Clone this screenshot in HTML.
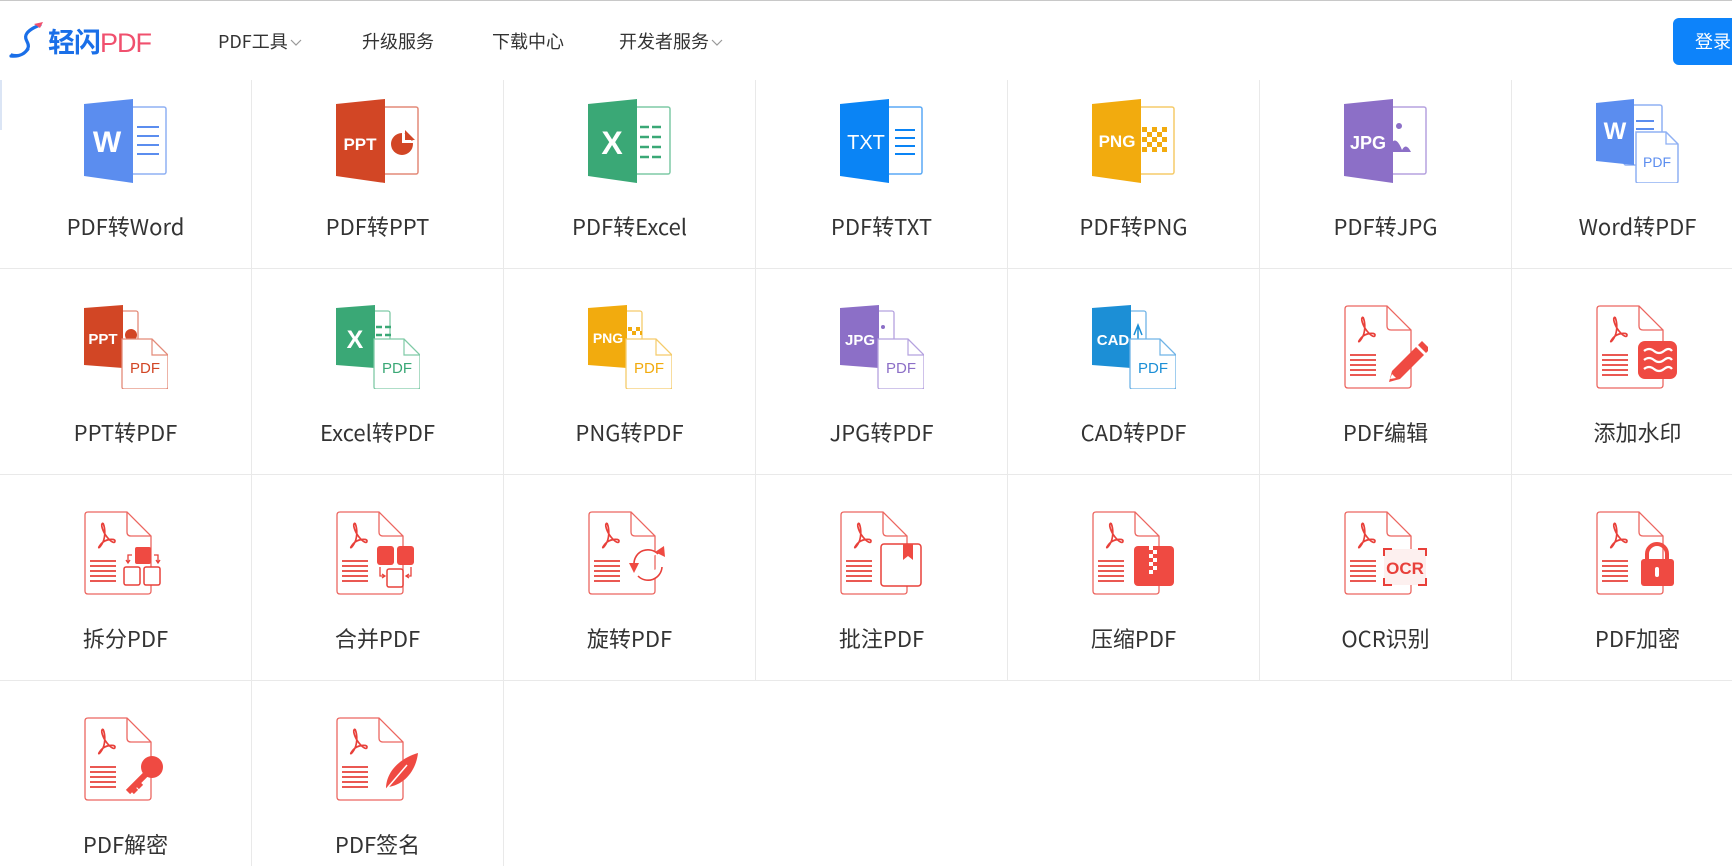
<!DOCTYPE html>
<html><head><meta charset="utf-8"><style>
*{margin:0;padding:0;box-sizing:border-box}
html,body{width:1732px;height:866px;overflow:hidden;background:#fff;font-family:"Noto Sans CJK SC","Liberation Sans",sans-serif;color:#333}
.hdr{position:absolute;left:0;top:0;width:1732px;height:80px;background:#fff;border-top:1px solid #c8c8c8;z-index:2}
.nav{position:absolute;top:27px;font-size:18px;color:#333;white-space:nowrap;line-height:26px}
.nav svg{vertical-align:middle;margin-left:2px}
.login{position:absolute;left:1673px;top:17px;width:59px;height:47px;border-radius:6px 0 0 6px;background:#0d83fa;color:#fff;font-size:18px;line-height:47px;padding-left:22px;white-space:nowrap;overflow:hidden}
.grid{position:absolute;left:0;top:63px;width:1732px;height:803px;overflow:hidden}
.cell{position:absolute;width:252px;height:206px;border-right:1px solid #e9e9e9;border-bottom:1px solid #e9e9e9}
.cell svg{position:absolute;left:84px;top:36px}
.cell .t{position:absolute;left:0;right:0;top:147px;text-align:center;font-size:22px;line-height:32px;color:#333}
</style></head><body>
<div class="hdr">
<svg style="position:absolute;left:8px;top:20px" width="40" height="38" viewBox="0 0 40 38"><path d="M32 4c-5 2-12 5-14 10s4 8 2 13-8 9-17 8" fill="none" stroke="#1a6fe8" stroke-width="3.2" stroke-linecap="round"/><path d="M26 3l9-2-3 6z" fill="#f0506e"/><path d="M3 33c7 2 15 0 18-5" fill="none" stroke="#1a6fe8" stroke-width="1.6"/></svg>
<div style="position:absolute;left:48px;top:22px;font-size:27px;line-height:36px;font-weight:bold;color:#1a6fe8;letter-spacing:-1px">轻闪<span style="color:#f0506e;font-weight:normal;font-family:'Liberation Sans',sans-serif">PDF</span></div>
<div class="nav" style="left:218px">PDF工具<svg width="12" height="8" viewBox="0 0 12 8"><path d="M1 1l5 5 5-5" fill="none" stroke="#999" stroke-width="1.2"/></svg></div>
<div class="nav" style="left:362px">升级服务</div>
<div class="nav" style="left:492px">下载中心</div>
<div class="nav" style="left:619px">开发者服务<svg width="12" height="8" viewBox="0 0 12 8"><path d="M1 1l5 5 5-5" fill="none" stroke="#999" stroke-width="1.2"/></svg></div>
<div class="login">登录</div>
</div>
<div style="position:absolute;left:0;top:80px;width:2px;height:50px;background:#dbe5f5;z-index:3"></div>
<div class="grid">
<div class="cell" style="left:0;top:0"><svg width="84" height="84" viewBox="0 0 84 84"><rect x="30" y="8" width="52" height="67" rx="2" fill="#fff" stroke="#8fb0f3" stroke-width="1.5"/><path d="M53 28h22M53 37h22M53 46h22M53 55h22" stroke="#5b8def" stroke-width="2"/><polygon points="0,5 49,0 49,84 0,77" fill="#5b8def"/><text x="23" y="53" font-size="30" font-weight="bold" fill="#fff" text-anchor="middle" font-family="Liberation Sans">W</text></svg><div class="t">PDF转Word</div></div>
<div class="cell" style="left:252px;top:0"><svg width="84" height="84" viewBox="0 0 84 84"><rect x="30" y="8" width="52" height="67" rx="2" fill="#fff" stroke="#e38a78" stroke-width="1.5"/><circle cx="66" cy="45" r="11" fill="#d24625"/><path d="M67 33v10h10" fill="#fff" stroke="#fff" stroke-width="2"/><path d="M69 31l10 10h-10z" fill="#d24625"/><polygon points="0,5 49,0 49,84 0,77" fill="#d24625"/><text x="24" y="51" font-size="17" font-weight="bold" fill="#fff" text-anchor="middle" font-family="Liberation Sans">PPT</text></svg><div class="t">PDF转PPT</div></div>
<div class="cell" style="left:504px;top:0"><svg width="84" height="84" viewBox="0 0 84 84"><rect x="30" y="8" width="52" height="67" rx="2" fill="#fff" stroke="#7fcaa6" stroke-width="1.5"/><path d="M52 28h9M64 28h9M52 38h9M64 38h9M52 48h9M64 48h9M52 58h9M64 58h9" stroke="#3aa876" stroke-width="2.5"/><polygon points="0,5 49,0 49,84 0,77" fill="#3aa876"/><text x="24" y="55" font-size="32" font-weight="bold" fill="#fff" text-anchor="middle" font-family="Liberation Sans">X</text></svg><div class="t">PDF转Excel</div></div>
<div class="cell" style="left:756px;top:0"><svg width="84" height="84" viewBox="0 0 84 84"><rect x="30" y="8" width="52" height="67" rx="2" fill="#fff" stroke="#5aa9f5" stroke-width="1.5"/><path d="M55 31h20M55 39h20M55 47h20M55 55h20" stroke="#0a84f5" stroke-width="2"/><polygon points="0,5 49,0 49,84 0,77" fill="#0a84f5"/><text x="26" y="50" font-size="20" fill="#fff" text-anchor="middle" font-family="Liberation Sans">TXT</text></svg><div class="t">PDF转TXT</div></div>
<div class="cell" style="left:1008px;top:0"><svg width="84" height="84" viewBox="0 0 84 84"><rect x="30" y="8" width="52" height="67" rx="2" fill="#fff" stroke="#f5cb6a" stroke-width="1.5"/><g fill="#f2ab0e"><rect x="50" y="28" width="5" height="5"/><rect x="60" y="28" width="5" height="5"/><rect x="70" y="28" width="5" height="5"/><rect x="55" y="33" width="5" height="5"/><rect x="65" y="33" width="5" height="5"/><rect x="50" y="38" width="5" height="5"/><rect x="60" y="38" width="5" height="5"/><rect x="70" y="38" width="5" height="5"/><rect x="55" y="43" width="5" height="5"/><rect x="65" y="43" width="5" height="5"/><rect x="50" y="48" width="5" height="5"/><rect x="60" y="48" width="5" height="5"/><rect x="70" y="48" width="5" height="5"/></g><polygon points="0,5 49,0 49,84 0,77" fill="#f2ab0e"/><text x="25" y="48" font-size="17" font-weight="bold" fill="#fff" text-anchor="middle" font-family="Liberation Sans">PNG</text></svg><div class="t">PDF转PNG</div></div>
<div class="cell" style="left:1260px;top:0"><svg width="84" height="84" viewBox="0 0 84 84"><rect x="30" y="8" width="52" height="67" rx="2" fill="#fff" stroke="#b5a2df" stroke-width="1.5"/><circle cx="55" cy="27" r="3" fill="#8c6fc7"/><path d="M44 53q6-22 14-2q4-8 9 2z" fill="#8c6fc7"/><polygon points="0,5 49,0 49,84 0,77" fill="#8c6fc7"/><text x="24" y="50" font-size="18" font-weight="bold" fill="#fff" text-anchor="middle" font-family="Liberation Sans">JPG</text></svg><div class="t">PDF转JPG</div></div>
<div class="cell" style="left:1512px;top:0"><svg width="84" height="84" viewBox="0 0 84 84"><rect x="28" y="6" width="38" height="60" rx="2" fill="#fff" stroke="#8fb0f3" stroke-width="1.5"/><path d="M40 22h18M40 30h18" stroke="#5b8def" stroke-width="2"/><polygon points="0,4 38,0 38,66 0,62" fill="#5b8def"/><text x="19" y="40" font-size="24" font-weight="bold" fill="#fff" text-anchor="middle" font-family="Liberation Sans">W</text><path d="M40 33H70L82 45V82Q82 84 80 84H42Q40 84 40 82Z" fill="#fff" stroke="#8fb0f3" stroke-width="1.5"/><path d="M70 33V45H82" fill="none" stroke="#8fb0f3" stroke-width="1.3"/><text x="61" y="68" font-size="14" fill="#5b8def" text-anchor="middle" font-family="Liberation Sans">PDF</text></svg><div class="t">Word转PDF</div></div>
<div class="cell" style="left:0;top:206px"><svg width="84" height="84" viewBox="0 0 84 84"><rect x="24" y="6" width="30" height="50" rx="2" fill="#fff" stroke="#e38a78" stroke-width="1.3"/><circle cx="47" cy="30" r="6" fill="#d24625"/><polygon points="0,3 39,0 39,63 0,60" fill="#d24625"/><text x="19" y="39" font-size="15" font-weight="bold" fill="#fff" text-anchor="middle" font-family="Liberation Sans">PPT</text><path d="M38 34H68L84 50V82Q84 84 82 84H40Q38 84 38 82Z" fill="#fff" stroke="#e38a78" stroke-width="1.3"/><path d="M68 34V50H84" fill="none" stroke="#e38a78" stroke-width="1.2"/><text x="61" y="68" font-size="15" fill="#d24625" text-anchor="middle" font-family="Liberation Sans">PDF</text></svg><div class="t">PPT转PDF</div></div>
<div class="cell" style="left:252px;top:206px"><svg width="84" height="84" viewBox="0 0 84 84"><rect x="24" y="6" width="30" height="50" rx="2" fill="#fff" stroke="#7fcaa6" stroke-width="1.3"/><path d="M40 22h6M49 22h6M40 30h6M49 30h6" stroke="#3aa876" stroke-width="2.5"/><polygon points="0,3 39,0 39,63 0,60" fill="#3aa876"/><text x="19" y="43" font-size="25" font-weight="bold" fill="#fff" text-anchor="middle" font-family="Liberation Sans">X</text><path d="M38 34H68L84 50V82Q84 84 82 84H40Q38 84 38 82Z" fill="#fff" stroke="#7fcaa6" stroke-width="1.3"/><path d="M68 34V50H84" fill="none" stroke="#7fcaa6" stroke-width="1.2"/><text x="61" y="68" font-size="15" fill="#3aa876" text-anchor="middle" font-family="Liberation Sans">PDF</text></svg><div class="t">Excel转PDF</div></div>
<div class="cell" style="left:504px;top:206px"><svg width="84" height="84" viewBox="0 0 84 84"><rect x="24" y="6" width="30" height="50" rx="2" fill="#fff" stroke="#f5cb6a" stroke-width="1.3"/><g fill="#f2ab0e"><rect x="40" y="22" width="4" height="4"/><rect x="48" y="22" width="4" height="4"/><rect x="44" y="26" width="4" height="4"/><rect x="52" y="26" width="2" height="4"/></g><polygon points="0,3 39,0 39,63 0,60" fill="#f2ab0e"/><text x="20" y="38" font-size="14" font-weight="bold" fill="#fff" text-anchor="middle" font-family="Liberation Sans">PNG</text><path d="M38 34H68L84 50V82Q84 84 82 84H40Q38 84 38 82Z" fill="#fff" stroke="#f5cb6a" stroke-width="1.3"/><path d="M68 34V50H84" fill="none" stroke="#f5cb6a" stroke-width="1.2"/><text x="61" y="68" font-size="15" fill="#f2ab0e" text-anchor="middle" font-family="Liberation Sans">PDF</text></svg><div class="t">PNG转PDF</div></div>
<div class="cell" style="left:756px;top:206px"><svg width="84" height="84" viewBox="0 0 84 84"><rect x="24" y="6" width="30" height="50" rx="2" fill="#fff" stroke="#b5a2df" stroke-width="1.3"/><circle cx="43" cy="22" r="2" fill="#8c6fc7"/><polygon points="0,3 39,0 39,63 0,60" fill="#8c6fc7"/><text x="20" y="40" font-size="15" font-weight="bold" fill="#fff" text-anchor="middle" font-family="Liberation Sans">JPG</text><path d="M38 34H68L84 50V82Q84 84 82 84H40Q38 84 38 82Z" fill="#fff" stroke="#b5a2df" stroke-width="1.3"/><path d="M68 34V50H84" fill="none" stroke="#b5a2df" stroke-width="1.2"/><text x="61" y="68" font-size="15" fill="#8c6fc7" text-anchor="middle" font-family="Liberation Sans">PDF</text></svg><div class="t">JPG转PDF</div></div>
<div class="cell" style="left:1008px;top:206px"><svg width="84" height="84" viewBox="0 0 84 84"><rect x="24" y="6" width="30" height="50" rx="2" fill="#fff" stroke="#6fb3e6" stroke-width="1.3"/><path d="M46 20v14M42 30l4-10 4 10" fill="none" stroke="#1c8fd6" stroke-width="1.5"/><polygon points="0,3 39,0 39,63 0,60" fill="#1c8fd6"/><text x="21" y="40" font-size="15" font-weight="bold" fill="#fff" text-anchor="middle" font-family="Liberation Sans">CAD</text><path d="M38 34H68L84 50V82Q84 84 82 84H40Q38 84 38 82Z" fill="#fff" stroke="#6fb3e6" stroke-width="1.3"/><path d="M68 34V50H84" fill="none" stroke="#6fb3e6" stroke-width="1.2"/><text x="61" y="68" font-size="15" fill="#1c8fd6" text-anchor="middle" font-family="Liberation Sans">PDF</text></svg><div class="t">CAD转PDF</div></div>
<div class="cell" style="left:1260px;top:206px"><svg width="84" height="84" viewBox="0 0 84 84"><path d="M4 1H43L67 25V80Q67 83 64 83H4Q1 83 1 80V4Q1 1 4 1Z" fill="#fff" stroke="#ec6660" stroke-width="1.3"/><path d="M43 1V21Q43 25 47 25H67" fill="none" stroke="#ec6660" stroke-width="1.3"/><path d="M19 12c-3 1 0 9 4 14s8 7 8 4-10-2-14 3-2 5 1 0 4-14 1-21" fill="none" stroke="#e8403a" stroke-width="1.7"/><path d="M6 50h26M6 55h26M6 60h26M6 65h26M6 70h26" stroke="#e8403a" stroke-width="1.7"/><path d="M48 66l24-24 8 8-24 24-11 3z" fill="#ef4a42"/><path d="M74 40l4-4 8 8-4 4z" fill="#ef4a42"/><path d="M46 74l2-5 4 4z" fill="#fff"/></svg><div class="t">PDF编辑</div></div>
<div class="cell" style="left:1512px;top:206px"><svg width="84" height="84" viewBox="0 0 84 84"><path d="M4 1H43L67 25V80Q67 83 64 83H4Q1 83 1 80V4Q1 1 4 1Z" fill="#fff" stroke="#ec6660" stroke-width="1.3"/><path d="M43 1V21Q43 25 47 25H67" fill="none" stroke="#ec6660" stroke-width="1.3"/><path d="M19 12c-3 1 0 9 4 14s8 7 8 4-10-2-14 3-2 5 1 0 4-14 1-21" fill="none" stroke="#e8403a" stroke-width="1.7"/><path d="M6 50h26M6 55h26M6 60h26M6 65h26M6 70h26" stroke="#e8403a" stroke-width="1.7"/><rect x="42" y="36" width="39" height="38" rx="7" fill="#ef4a42"/><path d="M48 46q5-4 10 0t10 0t8 0M48 55q5-4 10 0t10 0t8 0M48 64q5-4 10 0t10 0t8 0" fill="none" stroke="#fff" stroke-width="2.2"/></svg><div class="t">添加水印</div></div>
<div class="cell" style="left:0;top:412px"><svg width="84" height="84" viewBox="0 0 84 84"><path d="M4 1H43L67 25V80Q67 83 64 83H4Q1 83 1 80V4Q1 1 4 1Z" fill="#fff" stroke="#ec6660" stroke-width="1.3"/><path d="M43 1V21Q43 25 47 25H67" fill="none" stroke="#ec6660" stroke-width="1.3"/><path d="M19 12c-3 1 0 9 4 14s8 7 8 4-10-2-14 3-2 5 1 0 4-14 1-21" fill="none" stroke="#e8403a" stroke-width="1.7"/><path d="M6 50h26M6 55h26M6 60h26M6 65h26M6 70h26" stroke="#e8403a" stroke-width="1.7"/><rect x="51" y="36" width="16" height="17" rx="2" fill="#ef4a42"/><rect x="40" y="56" width="16" height="18" rx="2" fill="#fff" stroke="#e8403a" stroke-width="1.5"/><rect x="60" y="56" width="16" height="18" rx="2" fill="#fff" stroke="#e8403a" stroke-width="1.5"/><path d="M48 44h-4v7M42 49l2 3 2-3M70 44h4v7M72 49l2 3 2-3" fill="none" stroke="#e8403a" stroke-width="1.3"/></svg><div class="t">拆分PDF</div></div>
<div class="cell" style="left:252px;top:412px"><svg width="84" height="84" viewBox="0 0 84 84"><path d="M4 1H43L67 25V80Q67 83 64 83H4Q1 83 1 80V4Q1 1 4 1Z" fill="#fff" stroke="#ec6660" stroke-width="1.3"/><path d="M43 1V21Q43 25 47 25H67" fill="none" stroke="#ec6660" stroke-width="1.3"/><path d="M19 12c-3 1 0 9 4 14s8 7 8 4-10-2-14 3-2 5 1 0 4-14 1-21" fill="none" stroke="#e8403a" stroke-width="1.7"/><path d="M6 50h26M6 55h26M6 60h26M6 65h26M6 70h26" stroke="#e8403a" stroke-width="1.7"/><rect x="41" y="35" width="17" height="19" rx="3" fill="#ef4a42"/><rect x="61" y="35" width="17" height="19" rx="3" fill="#ef4a42"/><rect x="51" y="58" width="16" height="18" rx="2" fill="#fff" stroke="#e8403a" stroke-width="1.5"/><path d="M44 56v9h4M46 63l3 2-3 2M75 56v9h-4M73 63l-3 2 3 2" fill="none" stroke="#e8403a" stroke-width="1.3"/></svg><div class="t">合并PDF</div></div>
<div class="cell" style="left:504px;top:412px"><svg width="84" height="84" viewBox="0 0 84 84"><path d="M4 1H43L67 25V80Q67 83 64 83H4Q1 83 1 80V4Q1 1 4 1Z" fill="#fff" stroke="#ec6660" stroke-width="1.3"/><path d="M43 1V21Q43 25 47 25H67" fill="none" stroke="#ec6660" stroke-width="1.3"/><path d="M19 12c-3 1 0 9 4 14s8 7 8 4-10-2-14 3-2 5 1 0 4-14 1-21" fill="none" stroke="#e8403a" stroke-width="1.7"/><path d="M6 50h26M6 55h26M6 60h26M6 65h26M6 70h26" stroke="#e8403a" stroke-width="1.7"/><path d="M46 52a14 14 0 0 1 24-9M74 56a14 14 0 0 1-24 9" fill="#fff" stroke="#e8403a" stroke-width="1.6"/><path d="M67 41l9-6 1 11z" fill="#ef4a42"/><path d="M41 52l10 0-5 10z" fill="#ef4a42"/></svg><div class="t">旋转PDF</div></div>
<div class="cell" style="left:756px;top:412px"><svg width="84" height="84" viewBox="0 0 84 84"><path d="M4 1H43L67 25V80Q67 83 64 83H4Q1 83 1 80V4Q1 1 4 1Z" fill="#fff" stroke="#ec6660" stroke-width="1.3"/><path d="M43 1V21Q43 25 47 25H67" fill="none" stroke="#ec6660" stroke-width="1.3"/><path d="M19 12c-3 1 0 9 4 14s8 7 8 4-10-2-14 3-2 5 1 0 4-14 1-21" fill="none" stroke="#e8403a" stroke-width="1.7"/><path d="M6 50h26M6 55h26M6 60h26M6 65h26M6 70h26" stroke="#e8403a" stroke-width="1.7"/><rect x="41" y="33" width="40" height="42" rx="3" fill="#fff" stroke="#e8403a" stroke-width="1.5"/><path d="M63 33h10v16l-5-4-5 4z" fill="#ef4a42"/></svg><div class="t">批注PDF</div></div>
<div class="cell" style="left:1008px;top:412px"><svg width="84" height="84" viewBox="0 0 84 84"><path d="M4 1H43L67 25V80Q67 83 64 83H4Q1 83 1 80V4Q1 1 4 1Z" fill="#fff" stroke="#ec6660" stroke-width="1.3"/><path d="M43 1V21Q43 25 47 25H67" fill="none" stroke="#ec6660" stroke-width="1.3"/><path d="M19 12c-3 1 0 9 4 14s8 7 8 4-10-2-14 3-2 5 1 0 4-14 1-21" fill="none" stroke="#e8403a" stroke-width="1.7"/><path d="M6 50h26M6 55h26M6 60h26M6 65h26M6 70h26" stroke="#e8403a" stroke-width="1.7"/><rect x="42" y="35" width="40" height="40" rx="4" fill="#ef4a42"/><g fill="#fff"><rect x="57" y="35" width="4" height="4"/><rect x="61" y="39" width="4" height="4"/><rect x="57" y="43" width="4" height="4"/><rect x="61" y="47" width="4" height="4"/><rect x="57" y="51" width="4" height="4"/><rect x="61" y="55" width="4" height="4"/><rect x="57" y="59" width="4" height="4"/></g></svg><div class="t">压缩PDF</div></div>
<div class="cell" style="left:1260px;top:412px"><svg width="84" height="84" viewBox="0 0 84 84"><path d="M4 1H43L67 25V80Q67 83 64 83H4Q1 83 1 80V4Q1 1 4 1Z" fill="#fff" stroke="#ec6660" stroke-width="1.3"/><path d="M43 1V21Q43 25 47 25H67" fill="none" stroke="#ec6660" stroke-width="1.3"/><path d="M19 12c-3 1 0 9 4 14s8 7 8 4-10-2-14 3-2 5 1 0 4-14 1-21" fill="none" stroke="#e8403a" stroke-width="1.7"/><path d="M6 50h26M6 55h26M6 60h26M6 65h26M6 70h26" stroke="#e8403a" stroke-width="1.7"/><rect x="40" y="38" width="42" height="36" fill="#fdf0ef"/><path d="M40 45v-7h8M74 38h8v7M82 67v7h-8M48 74h-8v-7" fill="none" stroke="#e8403a" stroke-width="2"/><text x="61" y="63" font-size="17" font-weight="bold" fill="#e8403a" text-anchor="middle" font-family="Liberation Sans">OCR</text></svg><div class="t">OCR识别</div></div>
<div class="cell" style="left:1512px;top:412px"><svg width="84" height="84" viewBox="0 0 84 84"><path d="M4 1H43L67 25V80Q67 83 64 83H4Q1 83 1 80V4Q1 1 4 1Z" fill="#fff" stroke="#ec6660" stroke-width="1.3"/><path d="M43 1V21Q43 25 47 25H67" fill="none" stroke="#ec6660" stroke-width="1.3"/><path d="M19 12c-3 1 0 9 4 14s8 7 8 4-10-2-14 3-2 5 1 0 4-14 1-21" fill="none" stroke="#e8403a" stroke-width="1.7"/><path d="M6 50h26M6 55h26M6 60h26M6 65h26M6 70h26" stroke="#e8403a" stroke-width="1.7"/><path d="M51 50v-7a10 10 0 0 1 20 0v7" fill="none" stroke="#ef4a42" stroke-width="4"/><rect x="45" y="48" width="33" height="27" rx="3" fill="#ef4a42"/><rect x="59" y="56" width="4" height="10" rx="2" fill="#fff"/></svg><div class="t">PDF加密</div></div>
<div class="cell" style="left:0;top:618px;border-bottom:none;height:185px"><svg width="84" height="84" viewBox="0 0 84 84"><path d="M4 1H43L67 25V80Q67 83 64 83H4Q1 83 1 80V4Q1 1 4 1Z" fill="#fff" stroke="#ec6660" stroke-width="1.3"/><path d="M43 1V21Q43 25 47 25H67" fill="none" stroke="#ec6660" stroke-width="1.3"/><path d="M19 12c-3 1 0 9 4 14s8 7 8 4-10-2-14 3-2 5 1 0 4-14 1-21" fill="none" stroke="#e8403a" stroke-width="1.7"/><path d="M6 50h26M6 55h26M6 60h26M6 65h26M6 70h26" stroke="#e8403a" stroke-width="1.7"/><circle cx="68" cy="50" r="11" fill="#ef4a42"/><path d="M62 57l-18 18M48 71l4 4M53 66l4 4" stroke="#ef4a42" stroke-width="6"/></svg><div class="t">PDF解密</div></div>
<div class="cell" style="left:252px;top:618px;border-bottom:none;height:185px"><svg width="84" height="84" viewBox="0 0 84 84"><path d="M4 1H43L67 25V80Q67 83 64 83H4Q1 83 1 80V4Q1 1 4 1Z" fill="#fff" stroke="#ec6660" stroke-width="1.3"/><path d="M43 1V21Q43 25 47 25H67" fill="none" stroke="#ec6660" stroke-width="1.3"/><path d="M19 12c-3 1 0 9 4 14s8 7 8 4-10-2-14 3-2 5 1 0 4-14 1-21" fill="none" stroke="#e8403a" stroke-width="1.7"/><path d="M6 50h26M6 55h26M6 60h26M6 65h26M6 70h26" stroke="#e8403a" stroke-width="1.7"/><path d="M50 72c0-16 12-30 32-36c-2 18-14 32-30 34z" fill="#ef4a42"/><path d="M47 76l24-28" stroke="#fff" stroke-width="1.5"/></svg><div class="t">PDF签名</div></div>
</div>
</body></html>
